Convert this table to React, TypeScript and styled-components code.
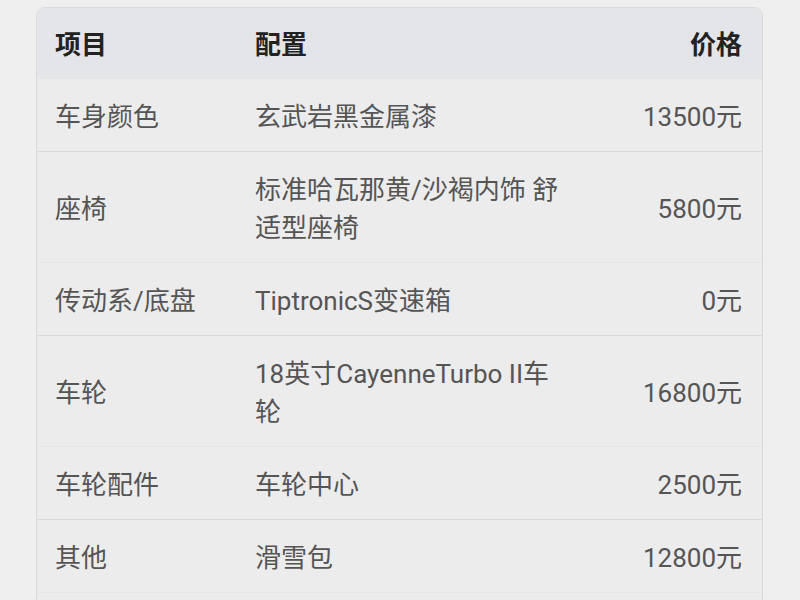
import styled, { createGlobalStyle } from 'styled-components';

const GlobalStyle = createGlobalStyle`
  html, body {
    margin: 0;
    padding: 0;
    background: #efefef;
    font-family: Roboto, "Noto Sans CJK SC", sans-serif;
  }
`;

const Page = styled.div`
  padding: 7px 36px 0 36px;
  width: 727px;
  height: 600px;
  overflow: hidden;
`;

const Card = styled.div`
  border: 1px solid #dadada;
  border-radius: 9px;
  background: #ececec;
  overflow: hidden;
`;

const Row = styled.div<{ $head?: boolean; $faint?: boolean }>`
  display: grid;
  grid-template-columns: 200px 312px 1fr;
  align-items: center;
  padding: ${p => (p.$head ? '18px 20px 14px 18px' : '19px 20px 15px 18px')};
  background: ${p => (p.$head ? '#e4e5e8' : 'transparent')};
  border-bottom: 1px solid ${p => (p.$head ? '#e4e5e8' : p.$faint ? '#e6e6e6' : '#d9d9d9')};
  font-size: 26px;
  line-height: 38px;
  font-weight: ${p => (p.$head ? 700 : 400)};
  color: ${p => (p.$head ? '#222' : '#555')};
`;

const Cell = styled.div<{ $right?: boolean }>`
  text-align: ${p => (p.$right ? 'right' : 'left')};
  min-height: 38px;
`;

const items = [
  { name: '车身颜色', config: '玄武岩黑金属漆', price: '13500元' },
  { name: '座椅', config: '标准哈瓦那黄/沙褐内饰 舒适型座椅', price: '5800元' },
  { name: '传动系/底盘', config: 'TiptronicS变速箱', price: '0元' },
  { name: '车轮', config: '18英寸CayenneTurbo II车轮', price: '16800元' },
  { name: '车轮配件', config: '车轮中心', price: '2500元' },
  { name: '其他', config: '滑雪包', price: '12800元' },
];

export default function App() {
  return (
    <>
      <GlobalStyle />
      <Page>
        <Card>
          <Row $head>
            <Cell>项目</Cell>
            <Cell>配置</Cell>
            <Cell $right>价格</Cell>
          </Row>
          {items.map((it, i) => (
            <Row key={it.name} $faint={i % 2 === 1}>
              <Cell>{it.name}</Cell>
              <Cell>{it.config}</Cell>
              <Cell $right>{it.price}</Cell>
            </Row>
          ))}
          <Row>
            <Cell />
            <Cell />
            <Cell $right />
          </Row>
        </Card>
      </Page>
    </>
  );
}
